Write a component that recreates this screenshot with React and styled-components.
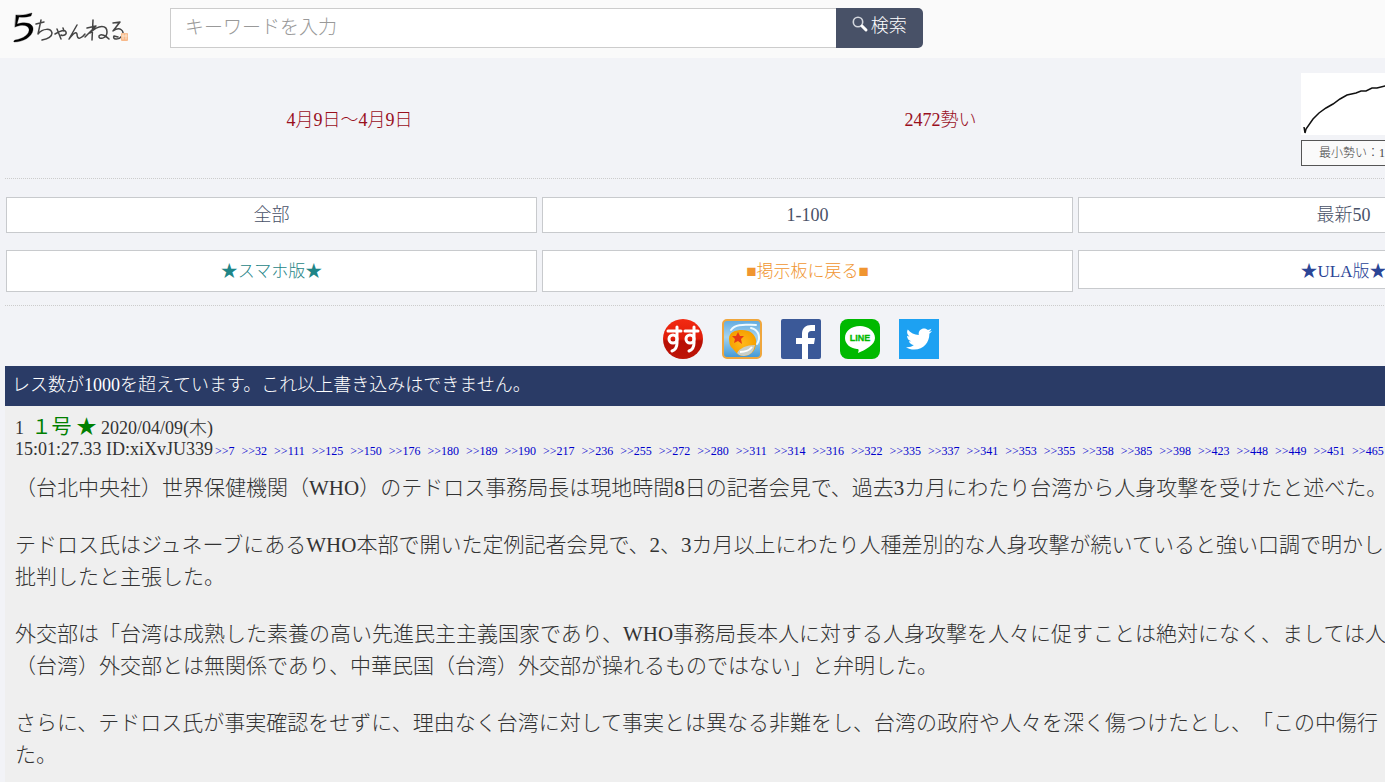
import React from 'react';
import styled, { createGlobalStyle } from 'styled-components';
import { FaTwitter } from 'react-icons/fa';

const Global = createGlobalStyle`
  * { box-sizing: border-box; }
  body {
    margin: 0;
    overflow: hidden;
    background: #f2f3f7;
    color: #333;
    font-family: "Liberation Serif", "Noto Sans CJK JP", serif;
    font-size: 18px;
    font-weight: 300;
    text-spacing-trim: space-all;
  }
  a { text-decoration: none; }
`;

const Page = styled.div`
  width: calc(100% + 230px);
  min-height: 100vh;
  display: flex;
  flex-direction: column;
`;

const Header = styled.header`
  display: flex;
  align-items: center;
  height: 58px;
  padding: 0 12px 2px;
  background: #fafafa;
`;

const LogoLink = styled.a`
  display: block;
  width: 158px;
  height: 40px;
`;

const Search = styled.form`
  display: flex;
  width: calc(47% + 5px);
  height: 40px;
`;

const SearchInput = styled.input`
  flex: 1;
  min-width: 0;
  padding: 0 14px;
  border: 1px solid #ccc;
  border-right: 0;
  border-radius: 0;
  background: #fff;
  font: inherit;
  font-size: 19px;
  &::placeholder { color: #999; opacity: 1; }
`;

const SearchButton = styled.button`
  display: flex;
  align-items: center;
  justify-content: center;
  gap: 2px;
  width: 87px;
  padding: 0 0 8px;
  border: 0;
  border-radius: 0 5px 5px 0;
  background: #485167;
  color: #fff;
  font: inherit;
`;

const Content = styled.main`
  flex: 1;
  display: flex;
  flex-direction: column;
  padding: 0 5px;
`;

const Stats = styled.section`
  display: grid;
  grid-template-columns: 591px 591px 1fr;
  align-items: center;
  height: 121px;
  padding-left: 49px;
  border-bottom: 1px dotted #ccc;
  color: #990f1d;
  text-align: center;
`;

const Momentum = styled.figure`
  margin: 0 0 0 65px;
  padding-top: 2px;
  width: 200px;
  svg { display: block; background: #fff; }
`;

const MomentumLabel = styled.figcaption`
  margin-top: 5px;
  height: 26px;
  padding-left: 17px;
  border: 1px solid #555;
  background: #fafafa;
  color: #444;
  font-size: 12px;
  line-height: 24px;
  text-align: left;
`;

const Menu = styled.nav`
  display: grid;
  grid-template-columns: repeat(3, 1fr);
  align-items: start;
  gap: 17px 5px;
  padding: 18px 1px 13px;
  border-bottom: 1px dotted #ccc;
`;

const MenuLink = styled.a`
  display: block;
  height: ${p => p.$height || 36}px;
  line-height: ${p => (p.$height ? 42 : 34)}px;
  border: 1px solid #c8cacd;
  background: #fff;
  color: ${p => p.$color || '#485167'};
  font-size: ${p => (p.$height ? 17 : 18)}px;
  text-align: center;
`;

const Share = styled.div`
  display: flex;
  justify-content: center;
  gap: 19px;
  padding: 13px 13px 7px 0;
  a { display: block; width: 40px; height: 40px; }
  svg { display: block; }
`;

const TwitterTile = styled.a`
  padding: 7px;
  background: #1da1f2;
  color: #fff;
`;

const Notice = styled.div`
  height: 40px;
  padding: 0 7px;
  background: #2a3b66;
  color: #fff;
  line-height: 38px;
`;

const Post = styled.article`
  flex: 1;
  padding: 10px;
  background: #efefef;
  white-space: nowrap;
`;

const Meta = styled.div`
  height: 22px;
  line-height: 22px;
`;

const Name = styled.b`
  margin: 0 0 0 3px;
  color: #008000;
  font-size: 20px;
  font-weight: 400;
`;

const Replies = styled.span`
  margin-left: 2px;
`;

const Reply = styled.a`
  margin-right: 7px;
  color: #0000cc;
  font-size: 12px;
`;

const Body = styled.div`
  margin-top: 12px;
  font-size: 21px;
  line-height: 32px;
  p { margin: 0 0 25px; }
`;

const replies = [7, 32, 111, 125, 150, 176, 180, 189, 190, 217, 236, 255, 272, 280, 311, 314, 316, 322,
  335, 337, 341, 353, 355, 358, 385, 398, 423, 448, 449, 451, 465];

const Logo = () => (
  <svg width="120" height="40" viewBox="0 0 120 40" fill="none" stroke="#444" strokeLinecap="round" strokeLinejoin="round">
    <path d="M4 7Q11 8 20 5L19 8Q13 10 7 9L5 16C15 13 22 16 21 22C20 29 11 34 2 34Q1 33 3 32C11 31 18 26 17 21C16 17 10 16 3 19Z" fill="#000" stroke="#000" strokeWidth=".3" />
    <g strokeWidth="1.5">
      <path d="M24 16L32 14M29 12L26 26C31 20 39 20 40 25C40 29 35 31 30 32" />
      <path d="M43 26C48 23 53 21 54 24C55 27 51 28 49 27M45 21L49 31M51 20L52 23" />
      <path d="M65 17L57 31C61 26 64 23 65 26C65 33 70 30 73 26" />
      <path d="M81 12L80 32M75 20L84 18L73 29M78 25C87 16 95 17 95 24C95 31 86 32 87 28C89 25 94 28 97 31" />
      <path d="M101 15L108 14L101 23C108 18 113 23 110 28C106 33 100 31 102 28L106 29" />
    </g>
    <rect x="109" y="25" width="7" height="8" rx="1" fill="#f8b98a" stroke="none" />
    <path d="M111 26V31M114 26V31M110 28H115" stroke="#fbe4cd" strokeWidth="1" />
  </svg>
);

const Magnifier = () => (
  <svg width="17" height="17" viewBox="0 0 17 17" fill="none" stroke="#d4d7de">
    <circle cx="6" cy="6" r="4.7" strokeWidth="1.6" />
    <path d="M10 10L14 14" stroke="#fff" strokeWidth="3" strokeLinecap="round" />
  </svg>
);

const SusuIcon = () => (
  <svg width="40" height="40" viewBox="0 0 40 40">
    <defs><linearGradient id="susu" x2="0" y2="1"><stop stopColor="#f32a12" /><stop offset=".5" stopColor="#df1c09" /><stop offset=".55" stopColor="#b80f05" /><stop offset="1" stopColor="#bd1508" /></linearGradient></defs>
    <circle cx="20" cy="20" r="20" fill="url(#susu)" />
    <g fill="none" stroke="#fff" strokeWidth="3" strokeLinecap="round">
      <path d="M5 12H18M14 8V24C14 29 12 31 9 32" />
      <circle cx="10" cy="20" r="4" />
      <path d="M22 12H35M31 8V24C31 29 29 31 26 32" />
      <circle cx="27" cy="20" r="4" />
    </g>
  </svg>
);

const BallIcon = () => (
  <svg width="40" height="40" viewBox="0 0 40 40">
    <defs>
      <linearGradient id="sky" x2="0" y2="1"><stop stopColor="#5fa9de" /><stop offset=".45" stopColor="#a5d3ee" /><stop offset="1" stopColor="#3f97d6" /></linearGradient>
      <radialGradient id="ball"><stop stopColor="#ffb91c" /><stop offset="1" stopColor="#f6a000" /></radialGradient>
    </defs>
    <rect x="1" y="1" width="38" height="38" rx="4" fill="url(#sky)" stroke="#efa63d" strokeWidth="2" />
    <path d="M9 11C14 4 24 6 34 6M29 9C37 11 39 19 35 25" fill="none" stroke="#eefaff" strokeWidth="2" strokeLinecap="round" />
    <path d="M7 20C7 13 13 11 20 11C28 11 33 15 34 21C35 30 30 37 21 37C15 37 13 31 9 28Q7 25 7 20Z" fill="url(#ball)" />
    <path d="M16 13L18 17L22 17L19 20L20 25L16 22L12 24L13 20L10 17H14Z" fill="#e63b16" />
    <path d="M15 34Q20 26 33 26Q31 37 22 37Q17 37 15 34" fill="#c9cfc9" />
    <path d="M18 33Q26 33 30 28" fill="none" stroke="#fff" strokeWidth="2" />
  </svg>
);

const FacebookIcon = () => (
  <svg width="40" height="40" viewBox="0 0 40 40">
    <rect width="40" height="40" rx="2" fill="#3b5998" />
    <path d="M21 40V25H15V19H21V15C21 9 25 6 30 6H34V12H31C28 12 27 13 27 16V19H34L33 25H27V40Z" fill="#fff" />
  </svg>
);

const LineIcon = () => (
  <svg width="40" height="40" viewBox="0 0 40 40">
    <rect width="40" height="40" rx="8" fill="#00b900" />
    <path d="M20 7C11 7 5 12 5 19C5 25 10 29 17 30C19 30 19 31 18 34C25 31 35 26 35 19C35 12 28 7 20 7Z" fill="#fff" />
    <text x="20" y="22" textAnchor="middle" fill="#00b900" stroke="#00b900" strokeWidth=".3" fontFamily="Liberation Sans, sans-serif" fontSize="9" fontWeight="700">LINE</text>
  </svg>
);

export default function App() {
  return (
    <>
      <Global />
      <Page>
        <Header>
          <LogoLink href="#" aria-label="5ちゃんねる"><Logo /></LogoLink>
          <Search onSubmit={e => e.preventDefault()}>
            <SearchInput type="text" aria-label="キーワード" placeholder="キーワードを入力" />
            <SearchButton type="submit"><Magnifier />検索</SearchButton>
          </Search>
        </Header>
        <Content>
          <Stats>
            <span>4月9日～4月9日</span>
            <span>2472勢い</span>
            <Momentum>
              <svg width="200" height="62" viewBox="0 0 200 62" fill="none" stroke="#111">
                <path d="M3 54L4 60L5 56L12 46L18 40L25 35L32 31L39 26L46 22L55 20L60 18L65 18L71 15L76 15L84 13L100 10L200 3" strokeWidth="1.5" />
              </svg>
              <MomentumLabel>最小勢い：1</MomentumLabel>
            </Momentum>
          </Stats>
          <Menu>
            <MenuLink href="#">全部</MenuLink>
            <MenuLink href="#">1-100</MenuLink>
            <MenuLink href="#">最新50</MenuLink>
            <MenuLink href="#" $height={42} $color="#1f8587">★スマホ版★</MenuLink>
            <MenuLink href="#" $height={42} $color="#f09530">■掲示板に戻る■</MenuLink>
            <MenuLink href="#" $height={39} $color="#2b4596">★ULA版★</MenuLink>
          </Menu>
          <Share>
            <a href="#" aria-label="すす"><SusuIcon /></a>
            <a href="#" aria-label="ボール"><BallIcon /></a>
            <a href="#" aria-label="Facebook"><FacebookIcon /></a>
            <a href="#" aria-label="LINE"><LineIcon /></a>
            <TwitterTile href="#" aria-label="Twitter"><FaTwitter size={26} /></TwitterTile>
          </Share>
          <Notice>レス数が1000を超えています。これ以上書き込みはできません。</Notice>
          <Post>
            <Meta>1 <Name>１号 ★</Name> 2020/04/09(木)</Meta>
            <Meta>
              15:01:27.33 ID:xiXvJU339
              <Replies>
                {replies.map(n => <Reply key={n} href="#">&gt;&gt;{n}</Reply>)}
              </Replies>
            </Meta>
            <Body>
              <p>（台北中央社）世界保健機関（WHO）のテドロス事務局長は現地時間8日の記者会見で、過去3カ月にわたり台湾から人身攻撃を受けたと述べた。</p>
              <p>テドロス氏はジュネーブにあるWHO本部で開いた定例記者会見で、2、3カ月以上にわたり人種差別的な人身攻撃が続いていると強い口調で明かし<br />批判したと主張した。</p>
              <p>外交部は「台湾は成熟した素養の高い先進民主主義国家であり、WHO事務局長本人に対する人身攻撃を人々に促すことは絶対になく、ましては人<br />（台湾）外交部とは無関係であり、中華民国（台湾）外交部が操れるものではない」と弁明した。</p>
              <p>さらに、テドロス氏が事実確認をせずに、理由なく台湾に対して事実とは異なる非難をし、台湾の政府や人々を深く傷つけたとし、「この中傷行<br />た。</p>
            </Body>
          </Post>
        </Content>
      </Page>
    </>
  );
}
